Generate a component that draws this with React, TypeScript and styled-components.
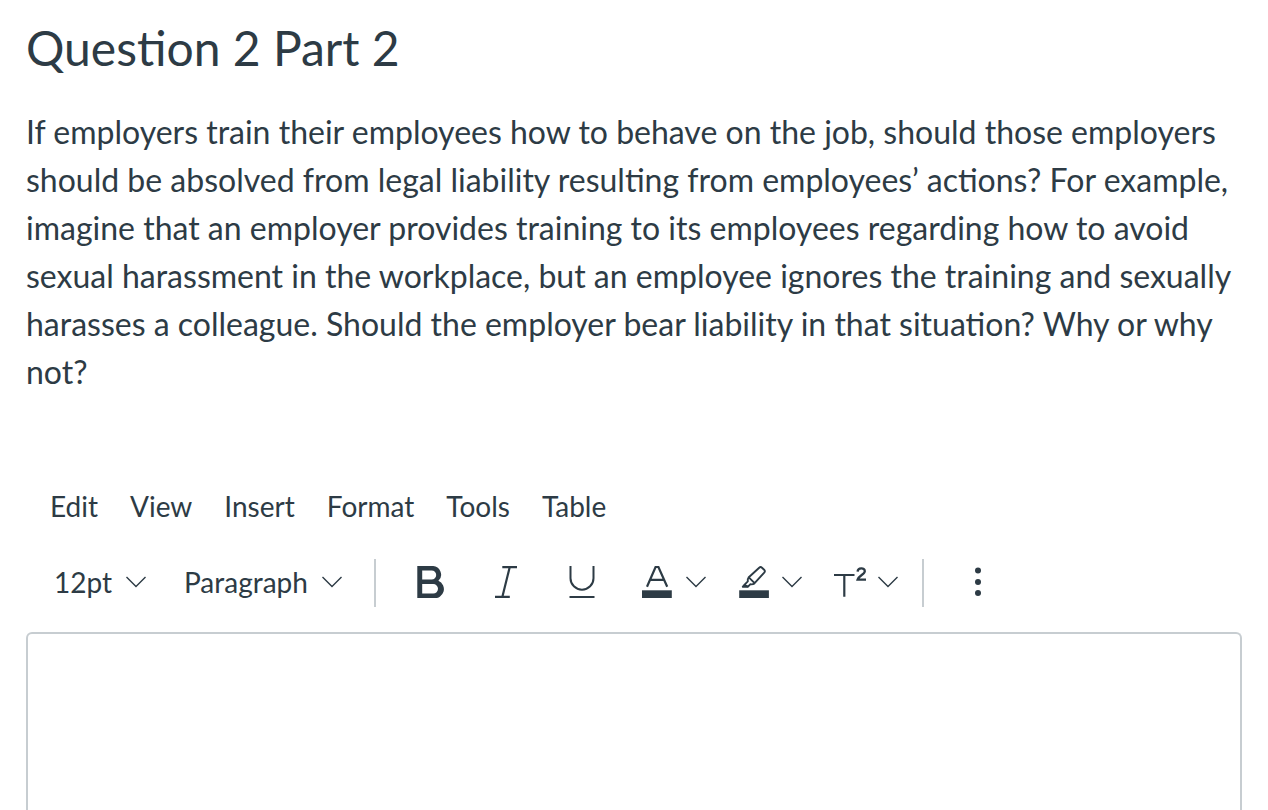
import React from "react";
import styled, { createGlobalStyle } from "styled-components";

const ink = "#2d3b45";
const line = "#c7cdd1";

const GlobalStyle = createGlobalStyle`
  *, *::before, *::after { box-sizing: border-box; }
  html, body { margin: 0; background: #fff; }
  body, button, select, textarea {
    font-family: Lato, Carlito, "Helvetica Neue", sans-serif;
    color: ${ink};
  }
`;

const Page = styled.main`
  display: flex;
  flex-direction: column;
  min-height: 100vh;
  padding: 18px 26px 0;
`;

const Title = styled.h1`
  margin: 0;
  font-size: 48px;
  line-height: 60px;
  font-weight: 400;
`;

const Prompt = styled.p`
  margin: 30px 0 0;
  font-size: 32px;
  line-height: 48px;
`;

const Editor = styled.section`
  display: flex;
  flex-direction: column;
  flex: 1;
  margin-top: 86px;
`;

const MenuBar = styled.nav`
  display: flex;
  flex-wrap: wrap;
  gap: 16px;
  padding-left: 16px;
`;

const MenuButton = styled.button`
  border: 0;
  background: none;
  padding: 0 8px;
  font-size: 28px;
  line-height: 48px;
  cursor: pointer;
`;

const Toolbar = styled.div`
  display: flex;
  align-items: flex-start;
  margin-top: 29px;
  padding-left: 28px;
`;

const Selects = styled.div`
  display: flex;
  gap: 38px;
`;

const SelectBox = styled.label<{ $width: number }>`
  display: grid;
  grid-template-columns: 1fr 20px;
  align-items: center;
  width: ${(p) => p.$width}px;

  select {
    grid-area: 1 / 1 / 2 / 3;
    appearance: none;
    width: 100%;
    height: 46px;
    border: 0;
    padding: 0 20px 0 0;
    background: none;
    font-size: 28px;
    cursor: pointer;
  }

  svg {
    grid-area: 1 / 2 / 2 / 3;
    pointer-events: none;
  }
`;

const Divider = styled.span`
  width: 2px;
  height: 48px;
  background: ${line};
`;

const Group = styled.div<{ $before: number; $after: number }>`
  display: flex;
  gap: 8px;
  margin: 0 ${(p) => p.$after}px 0 ${(p) => p.$before}px;
`;

const ToolButton = styled.button<{ $menu?: boolean }>`
  display: flex;
  align-items: center;
  gap: 12px;
  width: ${(p) => (p.$menu ? 88 : 68)}px;
  height: 46px;
  padding: 0 0 0 18px;
  border: 0;
  background: none;
  cursor: pointer;
`;

const Answer = styled.textarea`
  flex: 1;
  width: 100%;
  min-height: 100px;
  margin-top: 25px;
  padding: 24px;
  border: 2px solid ${line};
  border-bottom: 0;
  border-radius: 6px 6px 0 0;
  background: #fff;
  font-size: 32px;
  resize: none;
  outline: none;
`;

const Icon = ({ children }: { children: React.ReactNode }) => (
  <svg width="32" height="32" viewBox="0 0 32 32" fill="none" stroke={ink} strokeWidth="2" aria-hidden="true">
    {children}
  </svg>
);

const Chevron = () => (
  <svg width="20" height="12" viewBox="0 0 20 12" fill="none" stroke={ink} strokeWidth="1.4" aria-hidden="true">
    <path d="M0.5 1L10 10.5L19.5 1" />
  </svg>
);

const BoldIcon = () => (
  <Icon>
    <path
      d="M3.3 0H18A8.6 8.6 0 0 1 24.4 14.8A9 9 0 0 1 19.6 32H3.3ZM8.2 4.4V13.6H17.6A4.6 4.6 0 0 0 17.6 4.4ZM8.2 18V27.6H19.2A4.8 4.8 0 0 0 19.2 18Z"
      fill={ink}
      fillRule="evenodd"
      stroke="none"
    />
  </Icon>
);

const ItalicIcon = () => (
  <Icon>
    <path d="M12.3 1.2H27M5 30.8H19.8M19.7 1.2L12.4 30.8" strokeWidth="2.2" />
  </Icon>
);

const UnderlineIcon = () => (
  <Icon>
    <path d="M4.5 0V12.2A11.5 11.5 0 0 0 27.5 12.2V0M3.5 31H28.5" />
  </Icon>
);

const TextColorIcon = () => (
  <Icon>
    <path d="M5 20.8L13.6 1H16.4L25.2 20.8M8.6 13.8H21.6" strokeWidth="2.2" />
    <path d="M0 24.3H29.8V32H0Z" fill={ink} stroke="none" />
  </Icon>
);

const HighlightIcon = () => (
  <Icon>
    <g strokeWidth="1.9" strokeLinejoin="round">
      <path d="M10.8 11.3L21.2 1.7Q22.6 0.5 24 1.7L26.4 4Q27.4 5.2 26.2 6.6L16.6 17.2Z" />
      <path d="M10.8 11.3Q9.3 13 9.8 15.4L6.6 18.7L9.8 20.8L12.2 18.3Q15 18.7 16.6 17.2" />
      <path d="M6.8 18.6L4.8 20.7H9.7" />
    </g>
    <path d="M1.2 24.3H30.9V32H1.2Z" fill={ink} stroke="none" />
  </Icon>
);

const SuperscriptIcon = () => (
  <Icon>
    <path d="M0 9H20.5M10.3 9V30.7" strokeWidth="2.2" />
    <path d="M23.6 5.6C23.8 1.6 30.8 1.2 30.8 5.2C30.8 8.2 24.8 9.6 23.6 13.6H32" strokeWidth="2.3" />
  </Icon>
);

const MoreIcon = () => (
  <Icon>
    <g fill={ink} stroke="none">
      <circle cx="16" cy="4.5" r="3" />
      <circle cx="16" cy="16" r="3" />
      <circle cx="16" cy="27" r="3" />
    </g>
  </Icon>
);

const menus = ["Edit", "View", "Insert", "Format", "Tools", "Table"];

export default function App() {
  return (
    <>
      <GlobalStyle />
      <Page>
        <Title>Question 2 Part 2</Title>
        <Prompt>
          If employers train their employees how to behave on the job, should those employers should be absolved from
          legal liability resulting from employees’ actions? For example, imagine that an employer provides training to
          its employees regarding how to avoid sexual harassment in the workplace, but an employee ignores the training
          and sexually harasses a colleague. Should the employer bear liability in that situation? Why or why not?
        </Prompt>
        <Editor aria-label="Rich content editor">
          <MenuBar aria-label="Editor menu">
            {menus.map((name) => (
              <MenuButton key={name} type="button">
                {name}
              </MenuButton>
            ))}
          </MenuBar>
          <Toolbar role="toolbar" aria-label="Formatting">
            <Selects>
              <SelectBox $width={92}>
                <select aria-label="Font size" defaultValue="12pt">
                  <option>12pt</option>
                </select>
                <Chevron />
              </SelectBox>
              <SelectBox $width={158}>
                <select aria-label="Block format" defaultValue="Paragraph">
                  <option>Paragraph</option>
                </select>
                <Chevron />
              </SelectBox>
            </Selects>
            <Group $before={32} $after={20}>
              <Divider />
            </Group>
            <Group $before={0} $after={18}>
              <ToolButton type="button" aria-label="Bold">
                <BoldIcon />
              </ToolButton>
              <ToolButton type="button" aria-label="Italic">
                <ItalicIcon />
              </ToolButton>
              <ToolButton type="button" aria-label="Underline">
                <UnderlineIcon />
              </ToolButton>
              <ToolButton type="button" $menu aria-label="Text color">
                <TextColorIcon />
                <Chevron />
              </ToolButton>
              <ToolButton type="button" $menu aria-label="Background color">
                <HighlightIcon />
                <Chevron />
              </ToolButton>
              <ToolButton type="button" $menu aria-label="Superscript and subscript">
                <SuperscriptIcon />
                <Chevron />
              </ToolButton>
            </Group>
            <Divider />
            <Group $before={20} $after={0}>
              <ToolButton type="button" aria-label="More">
                <MoreIcon />
              </ToolButton>
            </Group>
          </Toolbar>
          <Answer aria-label="Answer" />
        </Editor>
      </Page>
    </>
  );
}
